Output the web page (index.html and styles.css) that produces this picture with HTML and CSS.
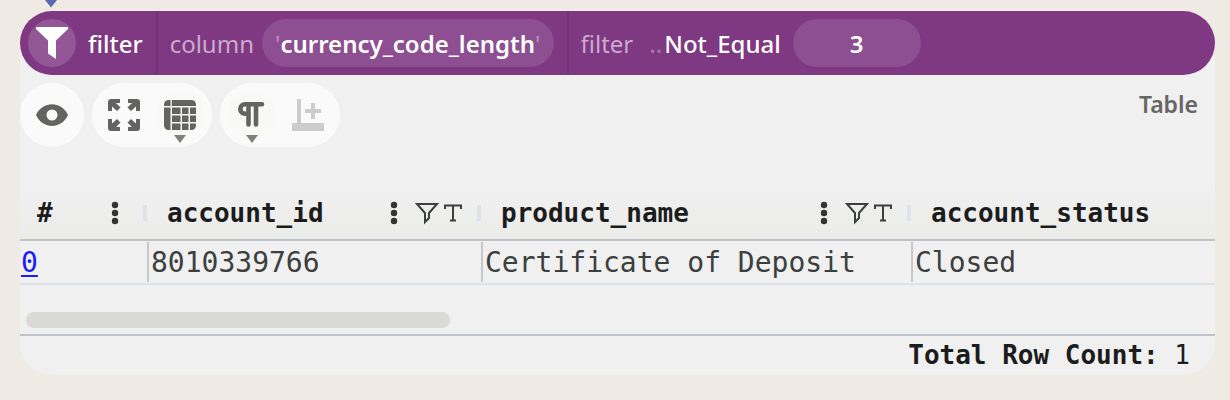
FILE: index.html
```
<!DOCTYPE html>
<html lang="en">
<head>
<meta charset="utf-8">
<title>Filter</title>
<link rel="stylesheet" href="styles.css">
</head>
<body>
<main class="panel">
  <svg class="connector" width="16" height="8" viewBox="0 0 16 8" aria-hidden="true"><path d="M2 0H14L8 7.500Z"/></svg>
  <header class="node">
    <div class="section">
      <span class="node-icon"><svg width="32" height="32" viewBox="0 0 32 32"><path d="M0 0H32V2L20 13.500V32L12 26.500V13.500L0 2Z" fill="#fff"/></svg></span>
      <span class="word name">filter</span>
    </div>
    <div class="section column">
      <span class="word dim">column</span>
      <button class="pill" type="button"><span class="quote">'</span>currency_code_length<span class="quote">'</span></button>
    </div>
    <div class="section condition">
      <span class="word dim">filter</span>
      <span class="word operator"><span class="dots">..</span>Not_Equal</span>
      <button class="pill value" type="button">3</button>
    </div>
  </header>
  <div class="toolbar">
    <div class="group">
      <button class="tool" type="button" aria-label="Show"><svg width="32" height="32" viewBox="0 0 32 32"><path fill-rule="evenodd" d="M0 16C6.500 1.500 25.500 1.500 32 16C25.500 30.500 6.500 30.500 0 16ZM16 10.500A5.500 5.500 0 1 0 16 21.500A5.500 5.500 0 1 0 16 10.500Z"/></svg></button>
    </div>
    <div class="group">
      <button class="tool" type="button" aria-label="Full screen"><svg width="34" height="34" viewBox="0 0 34 34">
        <g id="arrow"><path d="M1 13V4Q1 1 4 1H13V5H9L13.500 9.500L10 13L5 8.500V13Z"/></g>
        <use href="#arrow" transform="matrix(-1 0 0 1 34 0)"/><use href="#arrow" transform="matrix(1 0 0 -1 0 34)"/><use href="#arrow" transform="matrix(-1 0 0 -1 34 34)"/></svg></button>
      <button class="tool menu" type="button" aria-label="Table view"><svg width="34" height="32" viewBox="0 0 34 32"><path d="M1 7V6Q1 1 6 1H7.500V7ZM8.800 1H28Q33 1 33 6V7H8.800ZM1 8.600H7.500V31H6Q1 31 1 26ZM9 8.600H17.500V15H9ZM19 8.600H25.500V15H19ZM27 8.600H33V15H27ZM9 16.500H17.500V23H9ZM19 16.500H25.500V23H19ZM27 16.500H33V23H27ZM9 24.500H17.500V31H9ZM19 24.500H25.500V31H19ZM27 24.500H33V26Q33 31 28 31H27Z"/></svg><svg class="caret" width="12" height="8" viewBox="0 0 12 8"><path d="M0 0H12L6 8Z"/></svg></button>
    </div>
    <div class="group">
      <button class="tool menu" type="button" aria-label="Text format"><svg width="32" height="32" viewBox="0 0 32 32" fill="none" stroke="#636361" stroke-width="4.600" stroke-linecap="round"><path d="M26 5.300H9A4.700 4.700 0 0 0 9 14.700H12M12.500 6V25.500M20 6V25.500"/></svg><svg class="caret" width="12" height="8" viewBox="0 0 12 8"><path d="M0 0H12L6 8Z"/></svg></button>
      <button class="tool off" type="button" aria-label="Add chart" disabled><svg width="32" height="32" viewBox="0 0 32 32"><path d="M5 0H9V24H32V32H0V24H5ZM19 4H23V10H29V14H23V20H19V14H13V10H19Z"/></svg></button>
    </div>
    <span class="kind">Table</span>
  </div>
  <svg class="defs" width="0" height="0" aria-hidden="true">
    <symbol id="dots" viewBox="0 0 8 24"><circle cx="4" cy="4" r="3.200"/><circle cx="4" cy="12" r="3.200"/><circle cx="4" cy="20" r="3.200"/></symbol>
    <symbol id="funnel" viewBox="0 0 24 24"><path d="M2 3H22L14 12V17L10 21V12Z" fill="none" stroke="#3b403e" stroke-width="2"/></symbol>
    <symbol id="type" viewBox="0 0 18 24"><path d="M1 8V4.500H17V8M9 4.500V19.500M6 19.500H12" fill="none" stroke="#3b403e" stroke-width="2"/></symbol>
  </svg>
  <table class="grid">
    <colgroup><col class="col-index"><col class="col-id"><col class="col-name"><col></colgroup>
    <thead>
      <tr>
        <th scope="col"><div class="head"><span>#</span><span class="marks plain"><svg width="8" height="24"><use href="#dots"/></svg></span><i class="resizer"></i></div></th>
        <th scope="col"><div class="head"><span>account_id</span><span class="marks"><svg class="more" width="8" height="24"><use href="#dots"/></svg><svg width="24" height="24"><use href="#funnel"/></svg><svg width="18" height="24"><use href="#type"/></svg></span><i class="resizer"></i></div></th>
        <th scope="col"><div class="head"><span>product_name</span><span class="marks"><svg class="more" width="8" height="24"><use href="#dots"/></svg><svg width="24" height="24"><use href="#funnel"/></svg><svg width="18" height="24"><use href="#type"/></svg></span><i class="resizer"></i></div></th>
        <th scope="col"><div class="head"><span>account_status</span></div></th>
      </tr>
    </thead>
    <tbody>
      <tr><td><a href="#">0</a></td><td><div class="cell">8010339766</div></td><td><div class="cell">Certificate of Deposit</div></td><td><div class="cell">Closed</div></td></tr>
    </tbody>
  </table>
  <div class="scroll"><div class="thumb"></div></div>
  <footer class="total"><b>Total Row Count:</b> 1</footer>
</main>
</body>
</html>
```
FILE: styles.css
```
* { box-sizing: border-box; }
body {
  margin: 0;
  padding: 11px 15px 24px 20px;
  background: #efeae4;
  font-family: "Noto Sans", sans-serif;
  font-size: 24px;
}
button { border: 0; padding: 0; font: inherit; color: inherit; }
.panel { position: relative; border-radius: 32px; background: #f0f0f0; }
.connector { position: absolute; left: 23px; top: -11px; fill: #5b68b5; }
.node {
  display: flex;
  height: 64px;
  border-radius: 32px;
  background: #7f3882;
  color: #fff;
}
.section { display: flex; align-items: center; padding: 0 13px 0 8px; white-space: nowrap; }
.section + .section { border-left: 2px solid #743078; padding-left: 12px; }
.node-icon {
  display: flex;
  align-items: center;
  justify-content: center;
  width: 48px;
  height: 48px;
  margin-right: 12px;
  border-radius: 50%;
  background: #935797;
}
.name { font-weight: 500; }
.dim { color: #cbaacd; margin-right: 8px; }
.condition .dim { margin-right: 16px; }
.operator { margin-right: 12px; font-weight: 500; }
.dots { margin-right: 2px; color: #a877aa; }
.quote { color: #b88fba; font-weight: 400; }
.pill {
  height: 48px;
  padding: 0 13px;
  border-radius: 24px;
  background: #8d4f91;
  font-weight: 600;
}
.value { min-width: 128px; }
.toolbar { display: flex; gap: 8px; padding-top: 8px; }
.group { display: flex; gap: 8px; padding: 8px; border-radius: 32px; background: #fafafa; }
.tool {
  position: relative;
  display: flex;
  align-items: center;
  justify-content: center;
  width: 48px;
  height: 48px;
  border-radius: 50%;
  background: transparent;
  fill: #636361;
}
.menu { background: #f8f8f6; }
.off { fill: #cccccc; }
.caret { position: absolute; left: 18px; bottom: -4px; fill: #80807e; }
.kind {
  margin-left: auto;
  padding: 5px 17px 0 0;
  color: #666664;
  font-size: 23px;
  line-height: 32px;
  font-weight: 600;
}
.defs { position: absolute; }
.grid {
  width: 100%;
  margin-top: 40px;
  table-layout: fixed;
  border-collapse: separate;
  border-spacing: 0;
  font-family: "DejaVu Sans Mono", monospace;
  font-size: 28px;
  color: #3b403e;
}
.col-index { width: 127px; }
.col-id { width: 334px; }
.col-name { width: 430px; }
.grid thead { background: linear-gradient(#f0f0f0, #ebebea); }
.grid th {
  height: 54px;
  padding: 0;
  border-bottom: 2px solid #bdc3c9;
  text-align: left;
  font-size: 26px;
  color: #1c1c1c;
}
.head { display: flex; align-items: center; padding-left: 20px; line-height: 32px; }
th:first-child .head { padding-left: 17px; }
.marks { display: flex; align-items: center; gap: 5px; margin-left: auto; margin-right: 15px; fill: #333; }
.more { margin-right: 12px; }
.plain { margin-right: 24px; }
.resizer { width: 4px; height: 16px; background: #dde2eb; }
.grid td { height: 44px; padding: 0; border-bottom: 2px solid #dde2e8; white-space: nowrap; }
.grid td:first-child { padding-left: 1px; }
.cell { height: 40px; padding-left: 2px; border-left: 2px solid #c6c7c7; line-height: 42px; }
.grid a { color: #1a1aff; text-underline-offset: 3px; }
.scroll { height: 51px; padding: 27px 6px 0; border-bottom: 2px solid #bdc3c9; }
.thumb { width: 424px; max-width: 100%; height: 16px; border-radius: 8px; background: #d9dad7; }
.total {
  padding: 3px 25px 4px 0;
  text-align: right;
  font-family: "DejaVu Sans Mono", monospace;
  font-size: 26px;
  line-height: 32px;
  color: #1c1c1c;
}
```
